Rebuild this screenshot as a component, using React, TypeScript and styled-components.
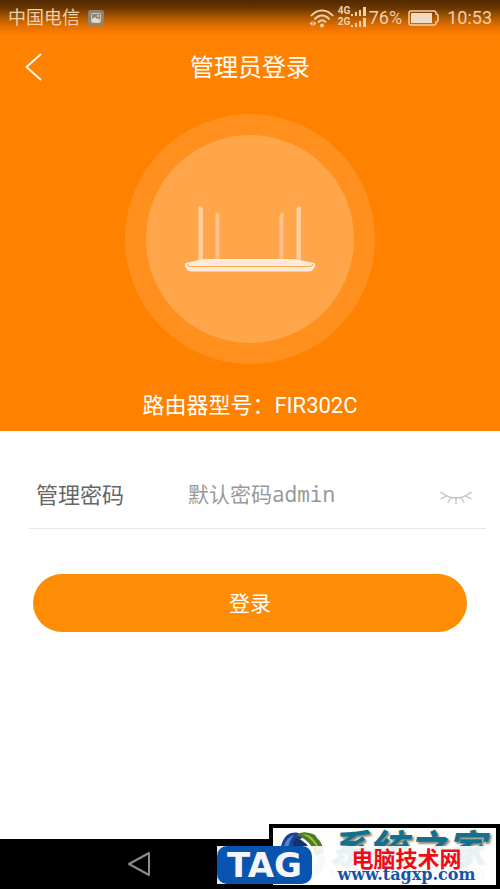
import React, { useState } from "react";
import styled, { createGlobalStyle } from "styled-components";

const GlobalStyle = createGlobalStyle`
  *, *::before, *::after { box-sizing: border-box; }
  html, body, #root { height: 100%; margin: 0; }
  body {
    background: #fff;
    font-family: Roboto, "Noto Sans CJK SC", sans-serif;
  }
  button, input { font: inherit; margin: 0; padding: 0; border: 0; background: none; }
  svg { display: block; flex: none; }
`;

const Screen = styled.div`
  position: relative;
  display: flex;
  flex-direction: column;
  min-height: 100%;
`;

const Hero = styled.header`
  display: flex;
  flex-direction: column;
  align-items: center;
  height: 431px;
  background: linear-gradient(#502800 0, #6a3600 8px, #b05a00 18px, #e87200 27px, #ff8100 36px);
  color: #fff;
`;

const StatusBar = styled.div`
  display: flex;
  align-items: center;
  align-self: stretch;
  height: 36px;
  padding: 0 8px;
  color: #efcfae;
  font-size: 18px;
  line-height: 24px;
`;

const Carrier = styled.span`
  margin-right: 8px;
`;

const StatusRight = styled.div`
  display: flex;
  align-items: center;
  margin-left: auto;
`;

const Networks = styled.div`
  display: grid;
  grid-template-columns: 13px 15px;
  align-items: end;
  margin: 0 3px 4px 4px;
  font-size: 10px;
  font-weight: 700;
  line-height: 11px;
`;

const Battery = styled.span`
  margin: 0 7px 0 6px;
`;

const TitleBar = styled.div`
  display: grid;
  grid-template-columns: 68px 1fr 68px;
  align-items: center;
  align-self: stretch;
  height: 64px;
`;

const BackButton = styled.button`
  display: flex;
  align-items: center;
  height: 48px;
  padding: 0 0 2px 24px;
  color: #fff;
`;

const Title = styled.h1`
  margin: 0;
  font-size: 24px;
  font-weight: 400;
  line-height: 32px;
  text-align: center;
`;

const Halo = styled.div`
  display: grid;
  place-items: center;
  width: 250px;
  height: 250px;
  margin-top: 14px;
  border-radius: 50%;
  background: #ff901d;
`;

const Disc = styled.div`
  display: grid;
  place-items: center;
  width: 208px;
  height: 208px;
  border-radius: 50%;
  background: #ffa54a;
`;

const Model = styled.p`
  margin: 26px 0 0;
  font-size: 22px;
  line-height: 32px;
`;

const Form = styled.form`
  flex: 1;
  padding: 32px 14px 0 28px;
`;

const Field = styled.div`
  display: flex;
  align-items: center;
  height: 66px;
  padding: 0 14px 0 8px;
  border-bottom: 1px solid #e8e8e8;
`;

const Label = styled.label`
  width: 152px;
  color: #666;
  font-size: 22px;
  line-height: 32px;
`;

const Password = styled.input`
  flex: 1;
  min-width: 0;
  height: 48px;
  padding-bottom: 4px;
  outline: 0;
  color: #666;
  font-family: "Noto Sans Mono", "DejaVu Sans Mono", "Noto Sans CJK SC", monospace;
  font-size: 21px;
  &::placeholder { color: #999; opacity: 1; }
`;

const IconButton = styled.button`
  display: flex;
  align-items: center;
  height: 40px;
`;

const RevealButton = styled(IconButton)`
  padding-top: 4px;
`;

const Submit = styled.button`
  display: block;
  width: calc(100% - 24px);
  height: 58px;
  margin: 45px 0 0 5px;
  padding-top: 2px;
  border-radius: 29px;
  background: #ff8c05;
  color: #fff;
  font-size: 21px;
  line-height: 32px;
`;

const NavBar = styled.nav`
  display: flex;
  align-items: center;
  height: 50px;
  padding-left: 126px;
  background: #000;
`;

const Watermark = styled.aside`
  position: absolute;
  right: 0;
  bottom: 0;
  width: 283px;
  height: 65px;
`;

const SitePanel = styled.div`
  position: absolute;
  right: 0;
  bottom: 0;
  width: 231px;
  height: 65px;
  border: 4px solid #000;
  background: #fdfdfa;
`;

const Globe = styled.svg`
  position: absolute;
  left: 4px;
  top: 2px;
`;

const SiteName = styled.span`
  position: absolute;
  left: 56px;
  top: -1px;
  color: #14708f;
  font-family: "Noto Sans CJK SC", sans-serif;
  font-size: 39px;
  font-style: italic;
  font-weight: 700;
  line-height: 38px;
  text-shadow: 2px 2px 2px #8a8878;
  white-space: nowrap;
`;

const SiteUrl = styled.span`
  position: absolute;
  left: 56px;
  top: 34px;
  color: #9cbccc;
  font-family: "Liberation Serif", serif;
  font-size: 19px;
  line-height: 20px;
`;

const TagStrip = styled.div`
  position: absolute;
  right: 4px;
  bottom: 5px;
  display: flex;
  width: 279px;
  height: 38px;
  background: rgba(255, 255, 255, 0.9);
`;

const TagLogo = styled.strong`
  display: grid;
  place-items: center;
  width: 95px;
  border-radius: 10px;
  background: #0755b0;
  color: #f4f6fa;
  font-family: "DejaVu Sans", sans-serif;
  font-size: 34px;
  font-weight: 700;
  line-height: 38px;
`;

const TagText = styled.div`
  display: flex;
  flex: 1;
  flex-direction: column;
  align-items: center;
  padding-left: 5px;
  white-space: nowrap;
`;

const TagName = styled.strong`
  color: #f20a14;
  font-family: "Noto Sans CJK SC", sans-serif;
  font-size: 22px;
  font-weight: 700;
  line-height: 22px;
`;

const TagUrl = styled.a`
  color: #1553a5;
  font-family: "DejaVu Serif", serif;
  font-size: 16px;
  font-weight: 700;
  line-height: 14px;
  text-decoration: none;
`;

function PictureIcon() {
  return (
    <svg width="16" height="16" viewBox="0 0 16 16">
      <rect width="16" height="16" rx="3" fill="#8d8475" />
      <rect x="3.5" y="3.5" width="9" height="9" rx="1" fill="none" stroke="#d9cbb8" />
      <path d="M4 9l3-2 2 2 1-1 2 2v2H4z" fill="#ead8c2" />
      <circle cx="10" cy="6" r="1" fill="#ead8c2" />
    </svg>
  );
}

function WifiIcon() {
  return (
    <svg width="25" height="20" viewBox="0 0 25 20" fill="none" stroke="#efcfae" strokeWidth="2">
      <path d="M2 8C8 .5 18 .5 24 8M5.500 11.500C10 6 16.500 6 20.500 11.500M9 14.500C11.500 11.500 15 11.500 17 14.500" />
      <circle cx="13" cy="17.500" r="2" fill="#efcfae" stroke="none" />
      <path d="M3.500 13v5L.5 15.500zM4.500 13v5l3-2.500z" fill="#efcfae" stroke="none" />
    </svg>
  );
}

function Bars() {
  return (
    <svg width="15" height="9" viewBox="0 0 15 9" fill="#efcfae">
      <path d="M0 7h2v2H0zM4 5h2v4H4zM8 3h2v6H8zM12 0h3v9h-3z" />
    </svg>
  );
}

function BatteryIcon() {
  return (
    <svg width="32" height="16" viewBox="0 0 32 16">
      <path d="M3 1h23q2 0 2 2v1q2 0 2 2v4q0 2-2 2v1q0 2-2 2H3q-2 0-2-2V3q0-2 2-2z" fill="none" stroke="#efcfae" strokeWidth="1.500" />
      <rect x="3" y="3" width="21" height="10" fill="#efdac3" />
    </svg>
  );
}

function RouterIcon() {
  return (
    <svg width="132" height="66" viewBox="0 0 132 66">
      <g fill="#ffcf9f">
        <path d="M14.500 1q0-1 1.500-.8 3 .8 3 4V55h-4.500z" />
        <path d="M117 1q0-1-1.500-.8-3 .8-3 4V55h4.500z" />
      </g>
      <g fill="#ffc189">
        <path d="M31.500 7.500q0-1 1-1 3 .3 3 3V54h-4z" />
        <path d="M99.500 7.500q0-1-1-1-3 .3-3 3V54h4z" />
      </g>
      <path d="M20 53h90l20 4q2 1 1 3-2 5.500-6 5.500H7Q3 65.500 1 60q-.6-2 1-3z" fill="#ffebd9" />
      <path d="M3 58q1 2.500 4 2.500h118q3 0 4-2.500" fill="none" stroke="#ffa54a" strokeWidth="1" />
    </svg>
  );
}

function ClosedEyeIcon() {
  return (
    <svg width="32" height="14" viewBox="0 0 32 14" fill="none" stroke="#bdbdbd" strokeWidth="1.300">
      <path d="M.5 1Q16 13 31.500 1M.5 8l6-3M31.500 8l-6-3M11 7l-3 4.500M16 7.500V13M21 7l3 4.500" />
    </svg>
  );
}

function GlobeIcon() {
  return (
    <Globe width="52" height="52" viewBox="0 0 52 52">
      <path d="M3 24Q1 40 14 44l6-9Q10 30 14 20z" fill="#3f7fc4" />
      <path d="M14 44q14 10 26 2 9-8 9-20l-9-2q-1 14-14 14z" fill="#a9cbe6" />
      <path d="M3 22Q5 6 14 3q8-2 12 3l-2 3Q13 12 12 24z" fill="#1d3f94" />
      <path d="M7 16Q10 7 17 5q-5 6-6 14z" fill="#4a8bd0" />
      <path d="M20 5q4-4 12-2 7 1 8 5 6 5 7 15l-9 3Q36 12 20 5z" fill="#4d7a24" />
      <path d="M25 4q8 0 12 6 5 5 5 12-5-13-17-18z" fill="#9dc13f" />
      <path d="M19 8q12 3 15 16-8-8-20-7z" fill="#16306b" />
    </Globe>
  );
}

export default function App() {
  const [password, setPassword] = useState("");
  const [visible, setVisible] = useState(false);
  return (
    <Screen>
      <GlobalStyle />
      <Hero>
        <StatusBar>
          <Carrier>中国电信</Carrier>
          <PictureIcon />
          <StatusRight>
            <WifiIcon />
            <Networks>
              <span>4G</span>
              <Bars />
              <span>2G</span>
              <Bars />
            </Networks>
            <span>76%</span>
            <Battery>
              <BatteryIcon />
            </Battery>
            <span>10:53</span>
          </StatusRight>
        </StatusBar>
        <TitleBar>
          <BackButton type="button" aria-label="返回">
            <svg width="18" height="28" viewBox="0 0 18 28" fill="none" stroke="currentColor" strokeWidth="1.800">
              <path d="M17 1L2.500 14 17 27" />
            </svg>
          </BackButton>
          <Title>管理员登录</Title>
        </TitleBar>
        <Halo>
          <Disc>
            <RouterIcon />
          </Disc>
        </Halo>
        <Model>路由器型号：FIR302C</Model>
      </Hero>
      <Form onSubmit={(event) => event.preventDefault()}>
        <Field>
          <Label htmlFor="password">管理密码</Label>
          <Password
            id="password"
            type={visible ? "text" : "password"}
            placeholder="默认密码admin"
            value={password}
            onChange={(event) => setPassword(event.target.value)}
          />
          <RevealButton type="button" aria-label="显示密码" onClick={() => setVisible(!visible)}>
            <ClosedEyeIcon />
          </RevealButton>
        </Field>
        <Submit type="submit">登录</Submit>
      </Form>
      <NavBar>
        <IconButton type="button" aria-label="后退">
          <svg width="26" height="28" viewBox="0 0 26 28" fill="none" stroke="#8b8b8b" strokeWidth="2" strokeLinejoin="round">
            <path d="M23 3v22L3 14z" />
          </svg>
        </IconButton>
      </NavBar>
      <Watermark>
        <SitePanel>
          <GlobeIcon />
          <SiteName>系统之家</SiteName>
          <SiteUrl>www.Ghost123.com</SiteUrl>
        </SitePanel>
        <TagStrip>
          <TagLogo>TAG</TagLogo>
          <TagText>
            <TagName>电脑技术网</TagName>
            <TagUrl href="#">www.tagxp.com</TagUrl>
          </TagText>
        </TagStrip>
      </Watermark>
    </Screen>
  );
}
